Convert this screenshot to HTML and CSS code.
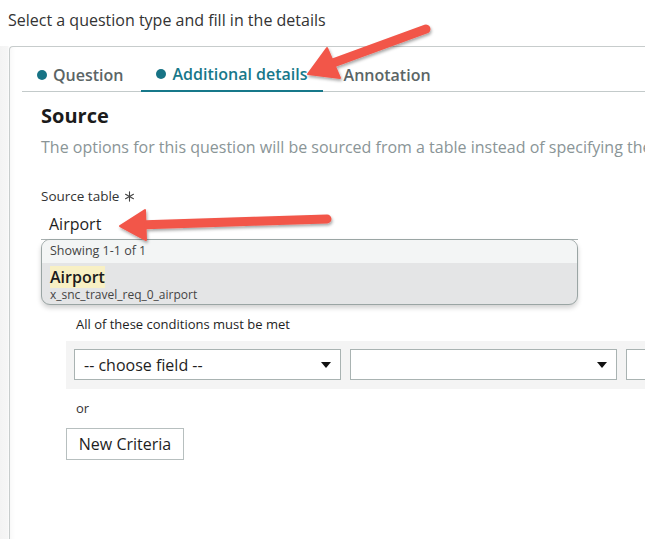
FILE: index.html
```html
<!DOCTYPE html>
<html>
<head>
<meta charset="utf-8">
<link rel="stylesheet" href="styles.css">
</head>
<body>
<div class="page">
  <div class="title">Select a question type and fill in the details</div>
  <div class="panel">
    <div class="tabs">
      <div class="tab"><span class="dot"></span>Question</div>
      <div class="tab active"><span class="dot"></span>Additional details</div>
      <div class="tab plain">Annotation</div>
    </div>
    <div class="content">
      <h2 class="heading">Source</h2>
      <p class="desc">The options for this question will be sourced from a table instead of specifying the options manually</p>
      <div class="label">Source table <svg class="req" width="11" height="11" viewBox="0 0 12 12"><g stroke="#444" stroke-width="1.2" stroke-linecap="round"><line x1="6" y1="1" x2="6" y2="11"/><line x1="1.7" y1="3.5" x2="10.3" y2="8.5"/><line x1="1.7" y1="8.5" x2="10.3" y2="3.5"/></g></svg></div>
      <div class="input">Airport</div>
      <div class="dropdown">
        <div class="dd-head">Showing 1-1 of 1</div>
        <div class="dd-item">
          <div class="dd-name"><mark>Airport</mark></div>
          <div class="dd-sub">x_snc_travel_req_0_airport</div>
        </div>
      </div>
      <div class="conditions">
        <div class="cond-label">All of these conditions must be met</div>
        <div class="cond-row">
          <div class="select s1"><span>-- choose field --</span><span class="caret"></span></div>
          <div class="select s2"><span></span><span class="caret"></span></div>
          <div class="select s3"></div>
        </div>
        <div class="or">or</div>
        <button class="btn">New Criteria</button>
      </div>
    </div>
  </div>
  <svg class="arrows" width="645" height="539" viewBox="0 0 645 539">
    <defs>
      <filter id="sh" x="-20%" y="-50%" width="140%" height="200%">
        <feDropShadow dx="1" dy="2" stdDeviation="1.5" flood-color="#000" flood-opacity="0.35"/>
      </filter>
    </defs>
    <g fill="#f2564a" stroke="#f2564a" stroke-linejoin="round" filter="url(#sh)">
      <line x1="426" y1="29" x2="322" y2="67" stroke-width="9" stroke-linecap="round"/>
      <polygon points="308,74 327,48 340,78" stroke-width="2"/>
      <line x1="327" y1="219" x2="138" y2="225" stroke-width="9" stroke-linecap="round"/>
      <polygon points="120,226 145,210 146,240" stroke-width="2"/>
    </g>
  </svg>
</div>
</body>
</html>
```

FILE: styles.css
```css
* { box-sizing: border-box; }
html, body { margin: 0; padding: 0; background: #fff; }
body {
  font-family: "Open Sans", "Noto Sans", sans-serif;
  color: #2e2e2e;
  width: 645px;
  height: 539px;
  overflow: hidden;
}
.page { position: relative; width: 645px; height: 539px; overflow: hidden; background: linear-gradient(to right, #f3f3f3 0, #f6f6f6 8px, #fff 9px); }
.title {
  background: #fff;
  height: 46px;
  padding: 9px 0 0 8px;
  font-size: 16px;
  line-height: 22px;
  color: #333;
}
.panel {
  margin-left: 9px;
  width: 660px;
  height: 493px;
  background: #fff;
  border: 1px solid #c7cccc;
  border-right: none;
  border-bottom: none;
  border-top-left-radius: 4px;
  padding: 11px 0 0 12px;
  box-shadow: inset 6px 0 6px -6px rgba(0,0,0,0.06);
  overflow: hidden;
}
.tabs {
  display: flex;
  border-bottom: 1px solid #c3caca;
  height: 34px;
}
.tab {
  display: flex;
  align-items: center;
  padding: 0 15px 0 15px;
  height: 33px;
  font-size: 16px;
  font-weight: 600;
  color: #5b6566;
  margin-right: 3px;
}
.tab .dot {
  width: 10px;
  height: 10px;
  border-radius: 50%;
  background: #177385;
  margin-right: 6px;
}
.tab.active {
  color: #17788a;
  border-bottom: 2px solid #17788a;
  height: 34px;
  padding-top: 0;
}
.tab.plain { padding-left: 18px; }
.content { padding: 0 0 0 19px; }
.heading {
  margin: 10px 0 0 0;
  font-size: 20px;
  line-height: 28px;
  font-weight: 700;
  color: #1b1b1b;
}
.desc {
  margin: 6px 0 0 0;
  font-size: 16px;
  line-height: 22px;
  color: #8a9597;
  white-space: nowrap;
}
.label {
  margin-top: 29px;
  font-size: 13.5px;
  line-height: 18px;
  color: #333;
  display: flex;
  align-items: center;
  gap: 5px;
}
.req { display: block; }
.input {
  margin-top: 9px;
  width: 537px;
  height: 26px;
  padding-left: 8px;
  font-size: 16px;
  line-height: 20px;
  color: #1e1e1e;
  border-bottom: 1px solid #a9b1b1;
}
.dropdown {
  width: 537px;
  height: 66px;
  border: 1px solid #9aa5a4;
  border-radius: 9px;
  overflow: hidden;
  box-shadow: 0 3px 5px rgba(0,0,0,0.18);
  margin-top: -1px;
  background: #e4e5e6;
}
.dd-head {
  background: #f3f5f5;
  height: 23px;
  padding-left: 8px;
  font-size: 12.5px;
  line-height: 22px;
  color: #444;
}
.dd-item { padding: 5px 0 0 8px; }
.dd-name { font-size: 16px; line-height: 19px; font-weight: 600; color: #1b1b1b; }
.dd-name mark { background: #f8f0c4; color: inherit; padding: 0; }
.dd-sub { font-size: 12px; line-height: 16px; color: #444; }
.conditions { padding: 10px 0 0 25px; }
.cond-label { padding-left: 10px; font-size: 13px; line-height: 18px; color: #1e1e1e; }
.cond-row {
  margin-top: 8px;
  display: flex;
  gap: 9px;
  background: #f4f4f4;
  height: 48px;
  padding: 8px 0 0 8px;
  width: 640px;
}
.select {
  height: 31px;
  background: #fff;
  border: 1px solid #a9b3b2;
  display: flex;
  align-items: center;
  justify-content: space-between;
  padding: 0 9px 0 9px;
  font-size: 16px;
  color: #1e1e1e;
  flex: none;
}
.s1, .s2 { width: 267px; }
.s3 { width: 60px; }
.caret {
  width: 0; height: 0;
  border-left: 5px solid transparent;
  border-right: 5px solid transparent;
  border-top: 6px solid #111;
}
.or { margin-top: 10px; padding-left: 10px; font-size: 13px; line-height: 18px; color: #333; }
.btn {
  margin-top: 11px;
  width: 118px;
  height: 32px;
  background: #fff;
  border: 1px solid #b7bfbf;
  border-radius: 0;
  font-family: inherit;
  font-size: 16px;
  color: #1e1e1e;
  padding: 0;
}
.arrows { position: absolute; left: 0; top: 0; pointer-events: none; }
```
